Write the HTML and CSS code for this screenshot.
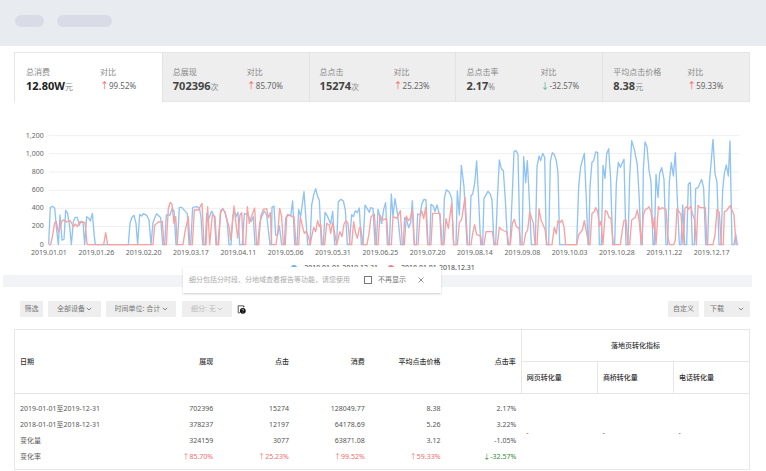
FILE: index.html
```html
<!DOCTYPE html>
<html lang="zh-CN">
<head>
<meta charset="utf-8">
<title>数据报告</title>
<link rel="stylesheet" href="styles.css">
</head>
<body>
<header class="topbar"><span class="pill"></span><span class="pill pill-wide"></span></header>
<main>
<section class="cards">
  <article class="card active"><div><p>总消费</p><strong>12.80W</strong><small>元</small></div><div><p>对比</p><span class="rate"><i class="up">↑</i>99.52%</span></div></article>
  <article class="card"><div><p>总展现</p><strong>702396</strong><small>次</small></div><div><p>对比</p><span class="rate"><i class="up">↑</i>85.70%</span></div></article>
  <article class="card"><div><p>总点击</p><strong>15274</strong><small>次</small></div><div><p>对比</p><span class="rate"><i class="up">↑</i>25.23%</span></div></article>
  <article class="card"><div><p>总点击率</p><strong>2.17</strong><small>%</small></div><div><p>对比</p><span class="rate"><i class="down">↓</i>-32.57%</span></div></article>
  <article class="card"><div><p>平均点击价格</p><strong>8.38</strong><small>元</small></div><div><p>对比</p><span class="rate"><i class="up">↑</i>59.33%</span></div></article>
</section>
<section class="chart">
<svg viewBox="0 0 2298 420" role="img">
  <path class="grid" d="M146 47H2217M146 101H2217M146 156H2217M146 211H2217M146 265H2217M146 319H2217M146 374H2217"/>
  <g class="ylabels"><text x="131" y="53">1,200</text><text x="131" y="107">1,000</text><text x="131" y="161">800</text><text x="131" y="216">600</text><text x="131" y="271">400</text><text x="131" y="325">200</text><text x="131" y="380">0</text></g>
  <g class="xlabels"><text x="147" y="404">2019.01.01</text><text x="289" y="404">2019.01.26</text><text x="431" y="404">2019.02.20</text><text x="573" y="404">2019.03.17</text><text x="715" y="404">2019.04.11</text><text x="857" y="404">2019.05.06</text><text x="999" y="404">2019.05.31</text><text x="1141" y="404">2019.06.25</text><text x="1283" y="404">2019.07.20</text><text x="1425" y="404">2019.08.14</text><text x="1567" y="404">2019.09.08</text><text x="1709" y="404">2019.10.03</text><text x="1851" y="404">2019.10.28</text><text x="1993" y="404">2019.11.22</text><text x="2135" y="404">2019.12.17</text></g>
  <g class="line blue">
    <polyline points="146,372 151,262 158,259 164,264 169,320 175,374 180,285 186,360 192,358 197,271 203,281 209,320 214,374 220,305 226,292 232,292 238,316 243,304 249,306 254,374 260,290 266,295 271,303 277,280 283,350 286,374 385,374 390,310 396,292 402,286 408,310 413,374 419,284 425,288 430,281 440,286 447,300 453,374 459,308 464,294 470,281 482,293 488,374 494,374 499,285 510,285 516,266 522,272 528,374 532,374 538,262 545,262 562,281 567,374 572,374 578,262"/>
    <polyline transform="translate(570)" points="8,262 20,260 28,264 33,290 38,374 46,374 50,280 56,297 65,273 73,290 78,374 84,374 91,280 98,265 106,278 112,310 117,374 123,374 129,285 134,275 138,290 144,277 149,374 157,374 163,281 168,281 175,288 184,304 190,290 195,374 203,374 209,310 215,290 223,273 230,285 240,374 244,374 246,262 252,258 257,345 263,345 268,318 275,374 283,374 287,295 293,283 302,288 308,243 314,374 321,374 326,268 332,290 342,215 348,300 353,374 360,374 365,255 371,225 377,206 383,230 388,240 394,374 400,374 405,277 413,290 422,312 428,274 434,374 440,374 445,245 453,238 460,243 466,270 472,374 478,374 485,284 490,290 496,272 502,278 508,264 514,374 519,374 525,255 533,268 538,277 542,263 549,265 555,374 559,374 564,268 575,312"/>
    <polyline transform="translate(1140)" points="5,312 11,268 17,248 22,374 28,374 34,222 39,290 45,236 53,285 62,374 70,374 74,292 80,300 86,323 92,308 97,242 103,374 109,374 113,282 120,285 126,250 132,238 138,240 144,374 149,374 153,253 160,258 165,275 171,255 180,290 184,374 189,374 193,235 199,209 208,217 215,235 221,374 228,374 232,213 238,285 244,136 252,200 261,374 268,374 273,228 278,222 284,190 290,123 296,240 302,374 308,374 312,235 324,214 331,222 336,240 342,374 347,374 352,240 358,120 364,146 370,152 376,240 383,374 390,374 397,220 402,95 408,92 414,104 420,374 426,374 431,110 437,188 442,122 448,240 454,374 466,374 471,140 477,108 482,122 488,100 494,112 499,374 506,374 511,125 517,98 523,104 529,122 534,158 539,374 590,374"/>
    <polyline transform="translate(1710)" points="20,374 26,200 32,140 43,100 49,240 54,374 56,374 60,200 66,126 71,122 77,96 83,97 88,374 94,374 99,136 105,175 110,102 116,86 122,180 128,374 134,374 139,190 145,127 151,142 162,118 168,374 174,374 179,170 185,62 193,88 202,135 208,240 213,374 217,374 220,150 225,66 231,80 237,150 243,185 249,374 253,374 258,163 264,232 269,160 275,143 282,178 288,374 293,374 298,185 304,128 310,168 316,98 322,240 328,374 333,374 338,255 344,374 350,374 355,192 361,188 367,374 373,374 377,206 384,203 395,178 401,205 407,374 413,374 418,190 424,120 429,58 435,160 441,187 447,374 453,374 458,210 463,160 469,135 475,168 480,63 486,374 492,374 497,342 502,374"/>
  </g>
  <g class="line red">
    <polyline points="146,374 152,374 158,345 164,308 169,305 175,337 181,320 186,302 192,300 198,306 210,302 215,310 221,320 226,312 232,320 238,306 255,308 261,372 264,374 311,374 317,338 323,374 459,374 464,316 475,306 487,304 492,374 499,374 505,265 511,247 516,253 522,310 527,290 532,374 549,374 555,335 565,291 570,374"/>
    <polyline transform="translate(570)" points="0,374 7,374 13,270 25,270 36,250 42,374 48,374 53,260 59,374 67,285 75,290 80,374 86,374 92,272 98,268 104,275 117,320 122,360 132,258 143,354 150,285 155,278 160,374 167,374 172,260 178,310 188,280 194,264 200,374 206,374 212,290 220,268 230,266 235,293 241,278 245,374 258,374 263,340 269,265 275,290 280,374 286,374 290,290 297,285 308,290 312,290 318,374 326,374 331,290 337,318 343,340 349,334 355,350 361,374 365,350 371,322 377,335 383,302 388,320 392,312 397,374 404,374 410,310 418,315 422,340 428,308 434,340 440,374 447,345 450,335 456,350 462,312 468,302 474,310 480,374 485,374 491,305 497,340 502,355 508,325 512,322 519,374 531,374 537,340 543,290 553,282 559,374 564,374 570,285"/>
    <polyline transform="translate(1140)" points="0,285 7,300 20,296 25,374 34,374 39,290 50,295 61,272 67,374 73,374 79,288 85,302 91,295 97,270 103,374 114,374 120,290 125,272 131,296 137,262 143,374 153,374 158,280 180,280 186,374 192,374 198,296 205,325 215,250 221,374 232,374 238,308 245,298 255,232 263,374 273,374 278,340 284,314 290,344 302,348 306,374 312,374 318,335 337,335 343,374 352,374 358,322 366,330 381,336 386,374 391,374 397,310 403,298 409,320 417,325 423,374 431,374 437,340 443,330 449,276 460,310 465,374 471,374 477,266 483,300 495,328 501,374 516,374 523,322 529,342 534,302 540,308 546,300 552,320 557,374 570,374"/>
    <polyline transform="translate(1710)" points="0,374 20,374 26,345 37,330 43,302 49,335 57,374 60,374 66,280 72,276 77,263 83,275 88,318 93,304 99,374 106,272 111,275 117,292 123,296 130,374 151,374 157,330 162,302 168,300 174,374 179,374 185,300 196,292 202,270 208,305 214,374 220,285 226,268 232,266 237,260 243,275 249,325 253,292 258,374 265,260 270,268 276,263 288,268 293,350 299,374 311,374 316,360 321,266 333,284 339,374 345,265 350,260 356,268 362,258 367,280 374,300 379,374 384,256 390,263 406,263 411,374 429,374 435,345 441,268 448,278 454,374 460,374 463,275 470,272 480,257 486,270 492,285 498,374 502,374"/>
  </g>
</svg>
<div class="legend"><span class="key key-blue">2019.01.01-2019.12.31</span><span class="key key-red">2018.01.01-2018.12.31</span></div>
</section>
<div class="band">
  <aside class="tip"><span>细分包括分时段、分地域查看报告等功能，请您使用</span><label><input type="checkbox">不再显示</label><button type="button" aria-label="关闭"><svg viewBox="0 0 6 6"><path d="M.5.5l5 5M5.5.5l-5 5"/></svg></button></aside>
</div>
<section class="filters">
  <button class="btn" type="button">筛选</button>
  <div class="pick pick-device"><select aria-label="设备"><option>全部设备</option></select><svg viewBox="0 0 6 4"><path d="M.8.8L3 3 5.2.8"/></svg></div>
  <div class="pick pick-time"><select aria-label="时间单位"><option>时间单位: 合计</option></select><svg viewBox="0 0 6 4"><path d="M.8.8L3 3 5.2.8"/></svg></div>
  <div class="pick pick-split"><select aria-label="细分" disabled><option>细分: 无</option></select><svg viewBox="0 0 6 4"><path d="M.8.8L3 3 5.2.8"/></svg></div>
  <button class="help" type="button" aria-label="帮助"><svg viewBox="0 0 9 9"><path d="M3 7.8H1.2V.8h5.2v1.6M6.4.8l1 1.2" fill="none" stroke="#444" stroke-width=".9"/><circle cx="5.8" cy="5.8" r="2.9" fill="#111"/><path d="M5 5.2c0-1.2 1.7-1.2 1.7-.1 0 .7-.8.6-.8 1.3M5.9 7v.5" fill="none" stroke="#fff" stroke-width=".6"/></svg></button>
  <button class="btn btn-custom" type="button">自定义</button>
  <div class="pick pick-download"><select aria-label="下载"><option>下载</option></select><svg viewBox="0 0 6 4"><path d="M.8.8L3 3 5.2.8"/></svg></div>
</section>
<table class="report">
  <colgroup><col class="col-date"><col><col><col><col><col><col class="col-sub"><col class="col-sub"><col class="col-sub"></colgroup>
  <thead>
    <tr><th class="date" rowspan="2">日期</th><th rowspan="2">展现</th><th rowspan="2">点击</th><th rowspan="2">消费</th><th rowspan="2">平均点击价格</th><th rowspan="2">点击率</th><th class="group" colspan="3">落地页转化指标</th></tr>
    <tr><th class="sub">网页转化量</th><th class="sub">商桥转化量</th><th class="sub">电话转化量</th></tr>
  </thead>
  <tbody>
    <tr><td class="date">2019-01-01至2019-12-31</td><td>702396</td><td>15274</td><td>128049.77</td><td>8.38</td><td>2.17%</td><td class="none" rowspan="4">-</td><td class="none" rowspan="4">-</td><td class="none" rowspan="4">-</td></tr>
    <tr><td class="date">2018-01-01至2018-12-31</td><td>378237</td><td>12197</td><td>64178.69</td><td>5.26</td><td>3.22%</td></tr>
    <tr><td class="date">变化量</td><td>324159</td><td>3077</td><td>63871.08</td><td>3.12</td><td>-1.05%</td></tr>
    <tr><td class="date">变化率</td><td class="rise">↑85.70%</td><td class="rise">↑25.23%</td><td class="rise">↑99.52%</td><td class="rise">↑59.33%</td><td class="fall">↓-32.57%</td></tr>
  </tbody>
</table>
</main>
</body>
</html>
```
FILE: styles.css
```css
* { box-sizing: border-box; }
body { margin: 0; background: #fff; color: #555; font: 7px/12px "Noto Sans", "Noto Sans CJK SC", sans-serif; }
p { margin: 0; }
button, select, input { font: inherit; color: inherit; margin: 0; }
.topbar { height: 46px; padding: 0 15px; display: flex; align-items: center; gap: 13px; background: #e8ebf0; }
.pill { width: 29px; height: 12px; margin-top: -4px; border-radius: 6px; background: #d9dce7; }
.pill-wide { width: 55px; }

.cards { margin: 6px 16px 0 14px; display: grid; grid-template-columns: repeat(5, 1fr); border: 1px solid #e6e6e6; border-bottom: 0; }
.card { height: 49px; padding: 12px 0 0 10px; display: grid; grid-template-columns: 74px 1fr; background: #eee; border-left: 1px solid #e2e2e2; border-bottom: 1px solid #e6e6e6; white-space: nowrap; font-size: 8px; line-height: 14px; color: #888; }
.card.active { padding-left: 11px; background: #fff; border-color: #fff; border-left: 0; }
.card strong { font-size: 11px; color: #444; }
.card.active strong { color: #222; }
.card small { font-size: 8px; }
.rate { color: #666; font-size: 8px; }
.rate i { font-style: normal; font-size: 9px; }
.up { color: #f5605c; }
.down { color: #4db28a; }

.chart { margin-top: 18px; }
.chart svg { display: block; width: 100%; }
.grid { stroke: #efefef; stroke-width: 3; }
.chart text { font-size: 21px; fill: #666; }
.ylabels { text-anchor: end; }
.xlabels { text-anchor: middle; }
.line { fill: none; stroke-width: 4; stroke-linejoin: round; }
.blue { stroke: #8fc3f3; }
.red { stroke: #f9a0a0; }
.legend { height: 15px; padding-top: 1px; display: flex; justify-content: center; gap: 10px; white-space: nowrap; color: #444; }
.key { display: flex; align-items: center; gap: 7px; }
.key::before { content: ""; width: 6px; height: 6px; border-radius: 50%; background: #6daef0; }
.key-red::before { background: #f27f7f; }

.band { position: relative; margin: 0 14px 0 3px; height: 12px; background: #f1f3f7; }
.tip { position: absolute; left: 180px; top: -8px; width: 258px; height: 26px; padding: 0 17px 0 6px; display: flex; align-items: center; background: #fff; box-shadow: 0 1px 2px #ccc; white-space: nowrap; color: #aaa; }
.tip label { margin-left: auto; display: flex; align-items: center; gap: 6px; color: #777; }
.tip input { appearance: none; width: 8px; height: 8px; border: 1px solid #777; }
.tip button { margin-left: 12px; padding: 0; border: 0; background: none; }
.tip button svg { display: block; width: 6px; height: 6px; stroke: #777; stroke-width: .8; }

.filters { margin: 14px 16px 0 20px; display: flex; gap: 5px; align-items: center; }
.btn, .pick { height: 16px; padding: 0; border: 0; background: #eee; color: #777; }
.btn { width: 23px; }
.pick { display: flex; align-items: center; justify-content: center; gap: 1px; }
.pick select { appearance: none; border: 0; padding: 0; background: none; opacity: 1; }
.pick svg { width: 6px; height: 4px; fill: none; stroke: #777; stroke-width: .9; }
.pick-device { width: 53px; }
.pick-time { width: 70px; margin-right: 1px; }
.pick-split { width: 50px; color: #bbb; }
.pick-split svg { stroke: #bbb; }
.help { width: 9px; height: 9px; padding: 0; border: 0; background: none; }
.help svg { display: block; width: 9px; height: 9px; }
.btn-custom { width: 31px; margin-left: auto; }
.pick-download { width: 46px; padding: 0 6px; justify-content: space-between; }

.report { width: calc(100% - 30px); margin: 12px 0 0 14px; table-layout: fixed; border-collapse: collapse; border: 1px solid #e8e8e8; }
.col-date { width: 17.4%; }
.col-sub { width: 10.35%; }
.report th, .report td { padding: 0 5px; text-align: right; white-space: nowrap; }
.report th { height: 32px; font-weight: 500; color: #333; }
.report thead { border-bottom: 1px solid #e2e2e2; }
.report .date { text-align: left; }
.report .group { text-align: center; border: 1px solid #e6e6e6; }
.report .sub { text-align: left; border: 1px solid #e6e6e6; }
.report td { height: 16px; }
.report tbody::before { content: ""; display: table-row; height: 7px; }
.report tbody::after { content: ""; display: table-row; height: 5px; }
.report .none { text-align: left; }
.report .rise { color: #f36a6a; }
.report .fall { color: #2d8a3a; }
```
